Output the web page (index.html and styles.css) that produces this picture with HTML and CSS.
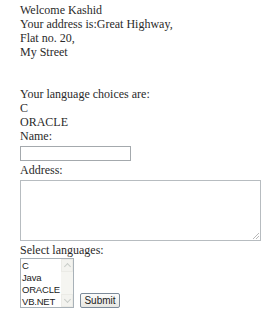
FILE: index.html
```html
<!DOCTYPE html>
<html lang="en">
<head>
    <meta charset="UTF-8">
    <title>Welcome</title>
    <link rel="stylesheet" href="styles.css">
</head>
<body>
    <div class="page">
        <div class="line">Welcome Kashid</div>
        <div class="line">Your address is:Great Highway,</div>
        <div class="line">Flat no. 20,</div>
        <div class="line">My Street</div>
        <div class="line"></div>
        <div class="line"></div>
        <div class="line">Your language choices are:</div>
        <div class="line">C</div>
        <div class="line">ORACLE</div>

        <form class="form">
            <label class="line" for="name">Name:</label>
            <input class="text-input" type="text" id="name">

            <label class="line" for="address">Address:</label>
            <div class="area"></div>

            <label class="line">Select languages:</label>
            <div class="row">
                <div class="listbox">
                    <div class="options">
                        <div>C</div>
                        <div>Java</div>
                        <div>ORACLE</div>
                        <div>VB.NET</div>
                    </div>
                    <div class="scroll">
                        <div class="arrow up"></div>
                        <div class="track"></div>
                        <div class="arrow down"></div>
                    </div>
                </div>
                <button type="button" class="submit">Submit</button>
            </div>
        </form>
    </div>
</body>
</html>
```

FILE: styles.css
```css
body {
    margin: 0;
    background: #fff;
}
.page {
    padding: 3px 0 0 20px;
    font-family: "Liberation Serif", "Times New Roman", serif;
    font-size: 12px;
    color: #2a2a2a;
}
.line {
    display: block;
    height: 14px;
    line-height: 14px;
    white-space: nowrap;
}
.form {
    margin: 0;
}
.text-input {
    display: block;
    box-sizing: border-box;
    width: 111px;
    height: 15px;
    margin: 3px 0 2px;
    padding: 0;
    border: 1px solid #a4a9ad;
}
.area {
    box-sizing: border-box;
    width: 241px;
    height: 61px;
    margin: 3px 0 2px;
    border: 1px solid #b7bcc0;
    position: relative;
}
.area::after {
    content: "";
    position: absolute;
    right: 1px;
    bottom: 1px;
    width: 6px;
    height: 6px;
    background: linear-gradient(135deg, transparent 45%, #b9b9b9 45%, #b9b9b9 55%, transparent 55%, transparent 70%, #b9b9b9 70%, #b9b9b9 80%, transparent 80%);
}
.row {
    display: flex;
    align-items: flex-end;
    gap: 6px;
    margin-top: 1px;
}
.listbox {
    box-sizing: border-box;
    display: flex;
    width: 54px;
    height: 50px;
    border: 1px solid #a8b1b8;
    overflow: hidden;
}
.options {
    flex: 1;
    min-width: 0;
    padding: 1px 0 0 1px;
    font-family: "Liberation Sans", Arial, sans-serif;
    font-size: 9.5px;
    letter-spacing: -0.2px;
    line-height: 12px;
    color: #222;
    white-space: nowrap;
}
.scroll {
    flex: none;
    width: 12px;
    display: flex;
    flex-direction: column;
    background: #f5f5f1;
}
.track {
    flex: 1;
}
.arrow {
    height: 13px;
    box-sizing: border-box;
    border: 1px solid #ebebe6;
    background: #f3f3ef;
    position: relative;
}
.arrow::after {
    content: "";
    position: absolute;
    left: 3px;
    width: 4px;
    height: 4px;
    border-left: 1px solid #c9cdc9;
    border-top: 1px solid #c9cdc9;
}
.up::after {
    top: 4px;
    transform: rotate(45deg);
}
.down::after {
    top: 2px;
    transform: rotate(225deg);
}
.submit {
    box-sizing: border-box;
    height: 15px;
    width: 40px;
    padding: 0;
    margin-bottom: 0;
    font-family: "Liberation Sans", Arial, sans-serif;
    font-size: 10px;
    line-height: 12px;
    color: #222;
    border: 1px solid #7c8a99;
    border-radius: 2px;
    background: linear-gradient(#fbfbfb, #e7e7e2);
}
```
